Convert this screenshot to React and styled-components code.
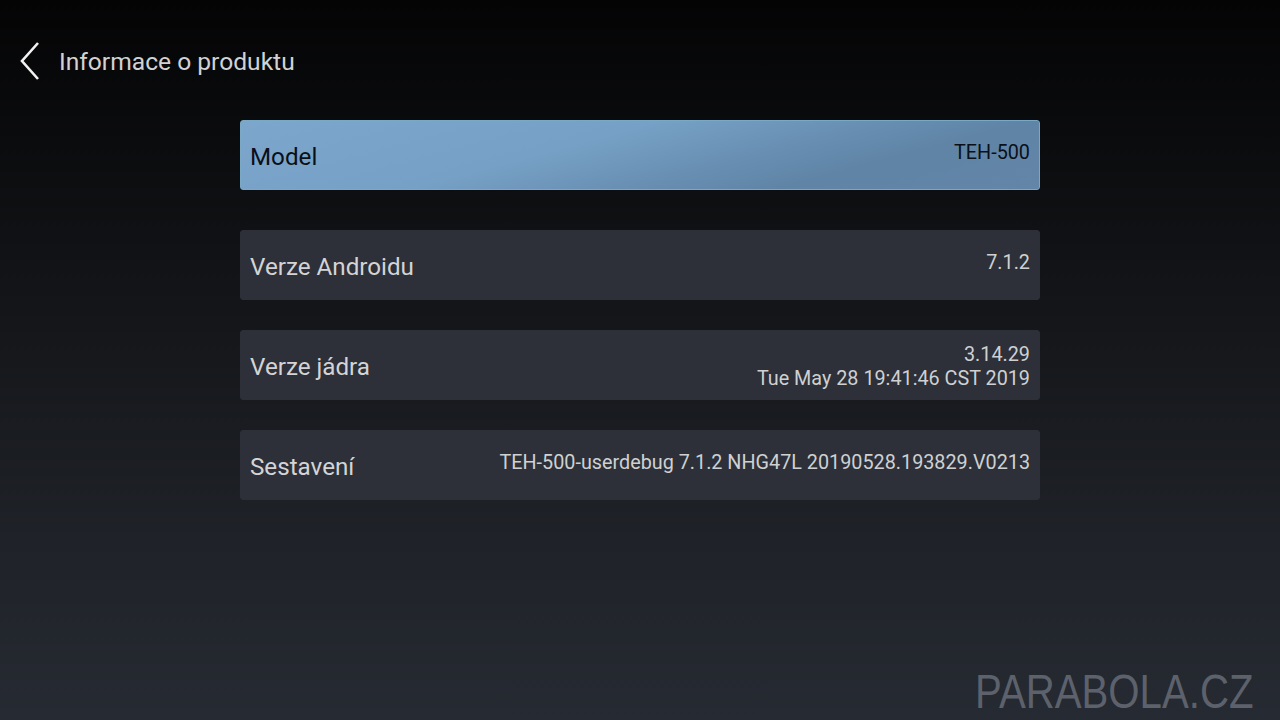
import React from 'react'
import styled, { createGlobalStyle } from 'styled-components'

const GlobalStyle = createGlobalStyle`
  html, body {
    margin: 0;
    padding: 0;
    background: #050506;
  }
  body {
    font-family: Roboto, 'Noto Sans', sans-serif;
  }
`

const rows = [
  { label: 'Model', values: ['TEH-500'], active: true },
  { label: 'Verze Androidu', values: ['7.1.2'] },
  { label: 'Verze jádra', values: ['3.14.29', 'Tue May 28 19:41:46 CST 2019'] },
  { label: 'Sestavení', values: ['TEH-500-userdebug 7.1.2 NHG47L 20190528.193829.V0213'] },
]

const App = () => {
  return (
    <Screen>
      <GlobalStyle />
      <Header>
        <BackIcon viewBox="0 0 20 38">
          <path d="M18 1 L2 19 L18 37" fill="none" stroke="#f2f2f2" strokeWidth="2.6" />
        </BackIcon>
        <Title>Informace o produktu</Title>
      </Header>
      <List>
        {rows.map((row) => (
          <Row key={row.label} $active={row.active}>
            <Label $active={row.active}>{row.label}</Label>
            <Values $active={row.active} $multi={row.values.length > 1}>
              {row.values.map((v) => (
                <span key={v}>{v}</span>
              ))}
            </Values>
          </Row>
        ))}
      </List>
      <Watermark>PARABOLA.CZ</Watermark>
    </Screen>
  )
}

export default App

const Screen = styled.div`
  width: 1280px;
  height: 720px;
  position: relative;
  overflow: hidden;
  background: linear-gradient(180deg, #040405 0%, #0b0c0e 20%, #16181c 50%, #1f2228 75%, #262a32 100%);
  display: flex;
  flex-direction: column;
`

const Header = styled.div`
  height: 120px;
  box-sizing: border-box;
  padding: 42px 0 0 20px;
  display: flex;
  align-items: flex-start;
`

const BackIcon = styled.svg`
  width: 20px;
  height: 38px;
`

const Title = styled.h1`
  margin: 0 0 0 19px;
  font-size: 24.6px;
  font-weight: 400;
  line-height: 40px;
  color: #d2d2d2;
`

const List = styled.div`
  width: 800px;
  margin: 0 auto;
  display: flex;
  flex-direction: column;
  gap: 30px;
  & > :first-child {
    margin-bottom: 10px;
  }
`

const Row = styled.div`
  height: 70px;
  box-sizing: border-box;
  padding: 0 9px;
  border-radius: 3px;
  display: flex;
  align-items: center;
  justify-content: space-between;
  background: ${(p) =>
    p.$active
      ? 'linear-gradient(165deg, #7da6cc 0%, #76a0c5 40%, #5f84a6 75%, #6385a8 100%)'
      : '#2d3038'};
  border: 1px solid ${(p) => (p.$active ? '#79a9c4' : '#2d3038')};
`

const Label = styled.span`
  font-size: 24.2px;
  color: ${(p) => (p.$active ? '#0b1018' : '#d4d4d6')};
  margin-top: 4px;
`

const Values = styled.div`
  display: flex;
  flex-direction: column;
  align-items: flex-end;
  font-size: 19.8px;
  line-height: 24px;
  color: ${(p) => (p.$active ? '#0b1018' : '#cfd0d2')};
  margin-bottom: ${(p) => (p.$multi ? '-4px' : '4px')};
`

const Watermark = styled.div`
  position: absolute;
  right: 27px;
  bottom: 1px;
  font-family: 'Liberation Sans', Arial, sans-serif;
  font-size: 49px;
  color: #5c616b;
  transform: scaleX(0.82);
  transform-origin: right bottom;
`
